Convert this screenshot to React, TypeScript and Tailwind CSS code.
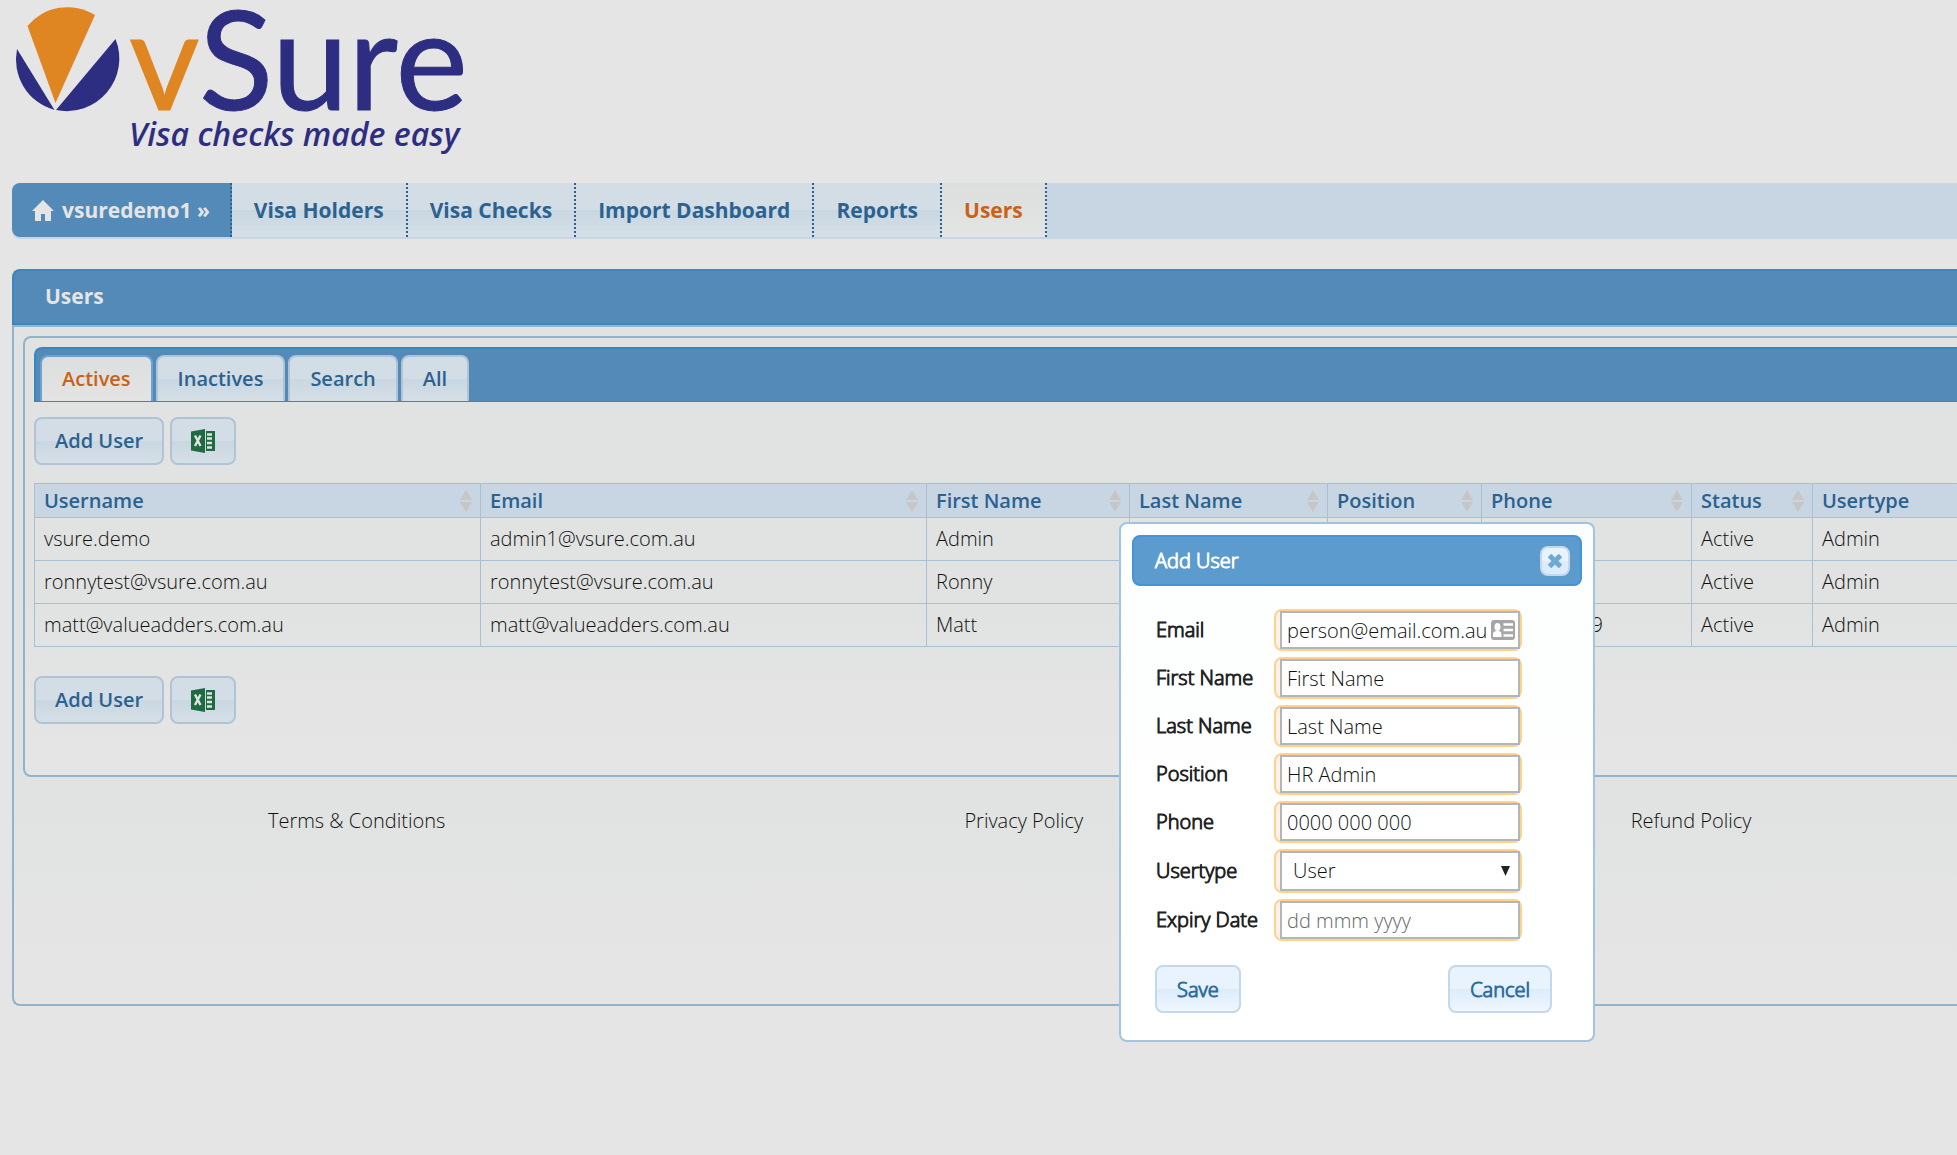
import type { ReactNode } from "react";

type User = {
  username: string;
  email: string;
  firstName: string;
  lastName: string;
  position: string;
  phone: string;
  status: string;
  usertype: string;
};

const navItems = ["Visa Holders", "Visa Checks", "Import Dashboard", "Reports", "Users"];
const tabs = ["Actives", "Inactives", "Search", "All"];

const columns = [
  { label: "Username", width: "w-[446px]" },
  { label: "Email", width: "w-[446px]" },
  { label: "First Name", width: "w-[203px]" },
  { label: "Last Name", width: "w-[198px]" },
  { label: "Position", width: "w-[154px]" },
  { label: "Phone", width: "w-[210px]" },
  { label: "Status", width: "w-[121px]" },
  { label: "Usertype", width: "" },
];

const users: User[] = [
  { username: "vsure.demo", email: "admin1@vsure.com.au", firstName: "Admin", lastName: "", position: "", phone: "", status: "Active", usertype: "Admin" },
  { username: "ronnytest@vsure.com.au", email: "ronnytest@vsure.com.au", firstName: "Ronny", lastName: "", position: "", phone: "", status: "Active", usertype: "Admin" },
  { username: "matt@valueadders.com.au", email: "matt@valueadders.com.au", firstName: "Matt", lastName: "", position: "", phone: "9", status: "Active", usertype: "Admin" },
];

const greyButton =
  "flex h-12 items-center justify-center rounded-lg border-2 border-[#b0c4d6] bg-linear-to-b from-[#d3dde6] from-50% via-[#c8d7e2] via-50% to-[#d6dfe6] px-[19px] font-semibold text-[#2b628f]";

const blueButton =
  "flex h-12 items-center justify-center rounded-lg border-2 border-[#c3d8eb] bg-linear-to-b from-[#e8f3fe] from-50% via-[#dcecfb] via-50% to-[#eff7ff] px-5 pt-[2px] text-[#2e6e9e] [-webkit-text-stroke:1px]";

function Logo() {
  return (
    <svg width="480" height="160" viewBox="0 0 480 160" role="img" aria-label="vSure">
      <path d="M27.500 26 A52 52 0 0 1 95 15 L55.500 103 Z" fill="#df8521" />
      <path d="M17 49 L54.500 110 A52.500 52.500 0 0 1 17 49 Z" fill="#2d2e81" />
      <path d="M115.500 39 L56 110 A52.500 52.500 0 0 0 115.500 39 Z" fill="#2d2e81" />
      <text x="129" y="110" fontFamily="Lato, sans-serif" fontWeight="400" fontSize="137" fill="#2d2e81" stroke="#2d2e81" strokeWidth="1">
        <tspan fill="#df8521" stroke="#df8521">v</tspan>Sure
      </text>
      <text x="129" y="146" fontFamily="Open Sans, sans-serif" fontStyle="italic" fontWeight="600" fontSize="32" fill="#2d2e81">
        Visa checks made easy
      </text>
    </svg>
  );
}

function ExcelIcon() {
  return (
    <svg width="24" height="24" viewBox="0 0 24 24" aria-hidden="true">
      <path d="M0 2.500 L14 0 V24 L0 21.500 Z" fill="#1f6b41" />
      <path d="M15 2 H24 V22 H15 Z" fill="#1f6b41" />
      <path d="M16 5.500 H21 M16 9.500 H21 M16 14 H21 M16 18.500 H21" stroke="#e1e3e2" strokeWidth="2.500" />
      <path d="M4 6.500 L9.500 17 M9.500 6.500 L4 17" stroke="#e1e3e2" strokeWidth="2.400" />
    </svg>
  );
}

function SortIcon() {
  return (
    <svg width="12" height="22" viewBox="0 0 12 22" fill="#c6c6c6" aria-hidden="true">
      <path d="M6 0 L12 10 H0 Z" />
      <path d="M0 12 H12 L6 22 Z" />
    </svg>
  );
}

function Toolbar() {
  return (
    <div className="flex gap-[6px]">
      <button type="button" className={greyButton}>Add User</button>
      <button type="button" aria-label="Export to Excel" className={greyButton}>
        <ExcelIcon />
      </button>
    </div>
  );
}

function Field({ id, label, children }: { id: string; label: string; children: ReactNode }) {
  return (
    <div className="flex items-center">
      <label htmlFor={id} className="w-[118px] text-[#222] [-webkit-text-stroke:1px]">
        {label}
      </label>
      <div className="relative w-[248px] rounded-lg border-2 border-[#ffd28c] bg-[#fef1ec] pl-1">{children}</div>
    </div>
  );
}

const inputClass = "block h-[38px] w-full border-2 border-[#b5b5b5] bg-white px-[5px] text-[#111] outline-none placeholder:text-[#666]";

function AddUserDialog() {
  return (
    <div
      role="dialog"
      aria-labelledby="dialog-title"
      className="absolute top-[522px] left-[1119px] w-[476px] rounded-lg border-2 border-[#9fc5e0] bg-linear-to-b from-[#fcfefd] to-white p-[11px] pb-[27px]"
    >
      <div className="flex h-[51px] items-center justify-between rounded-lg border-2 border-[#4394d8] bg-[#5c9bcd] pr-[10px] pl-[21px]">
        <h2 id="dialog-title" className="text-white [-webkit-text-stroke:1px]">Add User</h2>
        <button type="button" aria-label="Close" className="flex h-[30px] w-[30px] items-center justify-center rounded-lg border-2 border-[#c3d8eb] bg-linear-to-b from-[#e8f3fe] from-50% to-[#dcecfb] to-50%">
          <svg width="14" height="14" viewBox="0 0 14 14" stroke="#6fa9d6" strokeWidth="5" aria-hidden="true">
            <path d="M1.500 1.500 L12.500 12.500 M12.500 1.500 L1.500 12.500" />
          </svg>
        </button>
      </div>
      <form className="pt-[23px] pr-[23px] pl-6">
        <div className="flex flex-col gap-[6px]">
          <Field id="email" label="Email">
            <input id="email" defaultValue="person@email.com.au" className={inputClass} />
            <svg className="absolute top-[9px] right-[5px]" width="24" height="20" viewBox="0 0 24 20" aria-hidden="true">
              <rect width="24" height="20" rx="3" fill="#a6a6a6" />
              <ellipse cx="6.500" cy="7" rx="3" ry="4" fill="#fff" />
              <path d="M2 17 V14 Q2 11.500 5 11 H8 Q10.500 11.500 10.500 14 V17 Z" fill="#fff" />
              <path d="M12.500 4.500 H22 M12.500 10 H22 M12.500 15.500 H22" stroke="#fff" strokeWidth="2.500" />
            </svg>
          </Field>
          <Field id="first-name" label="First Name">
            <input id="first-name" defaultValue="First Name" className={inputClass} />
          </Field>
          <Field id="last-name" label="Last Name">
            <input id="last-name" defaultValue="Last Name" className={inputClass} />
          </Field>
          <Field id="position" label="Position">
            <input id="position" defaultValue="HR Admin" className={inputClass} />
          </Field>
          <Field id="phone" label="Phone">
            <input id="phone" defaultValue="0000 000 000" className={inputClass} />
          </Field>
          <Field id="usertype" label="Usertype">
            <select id="usertype" className="block h-10 w-full appearance-none border-2 border-[#b5b5b5] bg-white px-[11px] text-[#111] outline-none">
              <option>User</option>
            </select>
            <svg className="pointer-events-none absolute top-[15px] right-[10px]" width="9" height="10" viewBox="0 0 9 10" aria-hidden="true">
              <path d="M0 0 H9 L4.500 10 Z" fill="#222" />
            </svg>
          </Field>
          <Field id="expiry" label="Expiry Date">
            <input id="expiry" placeholder="dd mmm yyyy" className={inputClass} />
          </Field>
        </div>
        <div className="mt-6 -ml-px flex justify-between pr-[7px]">
          <button type="button" className={blueButton}>Save</button>
          <button type="button" className={blueButton}>Cancel</button>
        </div>
      </form>
    </div>
  );
}

export default function App() {
  return (
    <div className="relative min-h-screen overflow-hidden bg-[#e5e5e5] font-['Open_Sans',sans-serif] text-[20px] leading-7 font-light text-[#111]">
      <header className="h-[183px]">
        <Logo />
      </header>

      <div className="pl-3">
        <nav className="flex rounded-l-lg bg-[#c8d6e4] pb-[2px] text-[21px] font-bold text-[#2b628f]">
          <a href="#home" className="flex h-[54px] items-center gap-2 rounded-l-lg border-r-2 border-dotted border-[#2b628f] bg-[#538ab7] pr-5 pl-5 text-[#e5e5e5]">
            <svg width="22" height="21" viewBox="0 0 22 21" fill="#e5e5e5" aria-hidden="true">
              <path d="M11 0 L22 11 H19 V21 H13 V14 H9 V21 H3 V11 H0 Z" />
            </svg>
            vsuredemo1 »
          </a>
          {navItems.map((item) => (
            <a
              key={item}
              href={`#${item}`}
              className={`flex h-[54px] items-center border-r-2 border-dotted border-[#2b628f] px-[22px] ${
                item === "Users"
                  ? "bg-linear-to-b from-[#dcdfde] to-[#e3e4e3] text-[#cb6115]"
                  : "bg-linear-to-b from-[#d3dde6] from-50% via-[#c8d7e2] via-50% to-[#d6dfe6]"
              }`}
            >
              {item}
            </a>
          ))}
        </nav>

        <main className="mt-[30px]">
          <h1 className="flex h-14 items-center rounded-tl-lg border-2 border-r-0 border-[#3b86bf] bg-[#538ab7] pb-[2px] pl-[31px] text-[21px] font-bold text-[#e5e5e5]">
            Users
          </h1>
          <div className="rounded-bl-lg border-2 border-r-0 border-[#91b3cb] bg-linear-to-b from-[#e1e3e2] from-70% to-[#e5e5e5] pt-[9px] pb-[169px] pl-[9px]">
            <section className="rounded-l-lg border-2 border-r-0 border-[#91b3cb] bg-linear-to-b from-[#e1e3e2] from-60% to-[#e4e5e4] pt-[9px] pb-[51px] pl-[9px]">
              <div role="tablist" className="flex h-[55px] items-end gap-[3px] rounded-tl-lg border-2 border-r-0 border-b border-[#3b86bf] bg-[#538ab7] pl-1">
                {tabs.map((tab) => (
                  <button
                    key={tab}
                    type="button"
                    role="tab"
                    aria-selected={tab === "Actives"}
                    className={`h-[46px] rounded-t-lg border-2 border-b-0 px-5 font-semibold ${
                      tab === "Actives"
                        ? "border-[#6ba2d1] bg-linear-to-b from-[#dcdfde] to-[#e3e4e3] text-[#cb6115]"
                        : "border-[#b0c4d6] bg-linear-to-b from-[#d3dde6] from-50% via-[#c8d7e2] via-50% to-[#d6dfe6] text-[#2b628f]"
                    }`}
                  >
                    {tab}
                  </button>
                ))}
              </div>
              <div className="pt-[15px] pb-[18px]">
                <Toolbar />
              </div>
              <table className="w-full table-fixed border-collapse text-left">
                <thead>
                  <tr className="h-[34px] bg-[#c8d6e4] text-[#2b628f]">
                    {columns.map((col) => (
                      <th key={col.label} className={`border border-[#a9c0d3] pr-2 pl-[9px] font-semibold last:border-r-0 ${col.width}`}>
                        <div className="flex items-center justify-between">
                          {col.label}
                          {col.label !== "Usertype" && <SortIcon />}
                        </div>
                      </th>
                    ))}
                  </tr>
                </thead>
                <tbody>
                  {users.map((u) => (
                    <tr key={u.username} className="h-[43px]">
                      <td className="border border-[#a9c0d3] px-[9px]">{u.username}</td>
                      <td className="border border-[#a9c0d3] px-[9px]">{u.email}</td>
                      <td className="border border-[#a9c0d3] px-[9px]">{u.firstName}</td>
                      <td className="border border-[#a9c0d3] px-[9px]">{u.lastName}</td>
                      <td className="border border-[#a9c0d3] px-[9px]">{u.position}</td>
                      <td className="border border-[#a9c0d3] pr-[88px] text-right">{u.phone}</td>
                      <td className="border border-[#a9c0d3] px-[9px]">{u.status}</td>
                      <td className="border border-r-0 border-[#a9c0d3] px-[9px]">{u.usertype}</td>
                    </tr>
                  ))}
                </tbody>
              </table>
              <div className="pt-[29px]">
                <Toolbar />
              </div>
            </section>
            <footer className="mt-[30px] grid grid-cols-[repeat(3,34.5%)] text-center">
              <a href="#terms">Terms &amp; Conditions</a>
              <a href="#privacy">Privacy Policy</a>
              <a href="#refund">Refund Policy</a>
            </footer>
          </div>
        </main>
      </div>

      <AddUserDialog />
    </div>
  );
}
